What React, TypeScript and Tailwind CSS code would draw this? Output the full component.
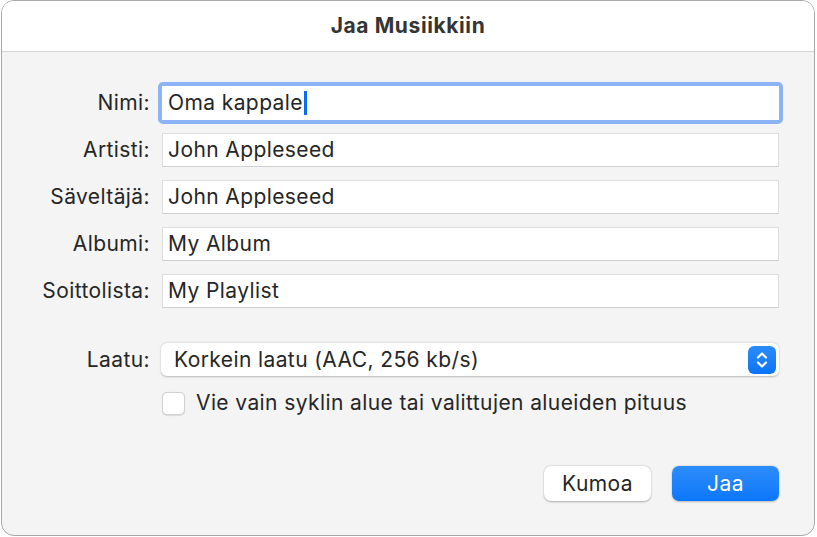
import React from 'react'

const fields = [
  { label: 'Nimi:', value: 'Oma kappale', focused: true },
  { label: 'Artisti:', value: 'John Appleseed' },
  { label: 'Säveltäjä:', value: 'John Appleseed' },
  { label: 'Albumi:', value: 'My Album' },
  { label: 'Soittolista:', value: 'My Playlist' },
]

function Field({ value, focused }: { value: string; focused?: boolean }) {
  if (focused) {
    return (
      <div className="flex-1 rounded-[5px] bg-[#8db3f7] p-[4px] -m-[4px]">
        <div className="h-[34px] bg-white flex items-center pl-[6px]">
          <span>{value}</span>
          <span className="ml-[1px] w-[3px] h-[24px] bg-[#0b6cf2]" />
        </div>
      </div>
    )
  }
  return (
    <div className="flex-1 h-[34px] bg-white border border-[#dedede] border-b-[#cfcfcf] flex items-center pl-[5px]">
      {value}
    </div>
  )
}

export default function App() {
  return (
    <div className="w-[817px] h-[537px] bg-white" style={{ fontFamily: '"Inter", "Liberation Sans", sans-serif' }}>
      <div className="w-[814px] h-[536px] ml-[1px] border border-[#a9a9a9] rounded-[13px] overflow-hidden bg-[#f4f4f4] flex flex-col">
        <div className="h-[51px] bg-white border-b border-[#d6d6d6] flex items-center justify-center">
          <span className="text-[21px] font-bold text-[#353535] tracking-[0.6px]">Jaa Musiikkiin</span>
        </div>

        <div className="flex flex-col pt-[34px] pr-[35px] text-[21px] leading-[26px] tracking-[0.4px] text-[#262626]">
          <div className="flex flex-col gap-[13px]">
            {fields.map((f) => (
              <div key={f.label} className="flex items-center">
                <div className="w-[149px] text-right pr-[1px]">{f.label}</div>
                <div className="w-[11px]" />
                <Field value={f.value} focused={f.focused} />
              </div>
            ))}
          </div>

          <div className="flex items-center mt-[35px]">
            <div className="w-[149px] text-right pr-[1px]">Laatu:</div>
            <div className="w-[10px]" />
            <div className="flex-1 h-[33px] bg-white rounded-[6px] shadow-[0_0.5px_2px_rgba(0,0,0,0.25)] flex items-center justify-between pl-[13px] pr-[3px]">
              <span>Korkein laatu (AAC, 256 kb/s)</span>
              <div className="w-[28px] h-[28px] rounded-[6px] bg-gradient-to-b from-[#2a8cf9] to-[#0a73f5] flex items-center justify-center">
                <svg width="14" height="20" viewBox="0 0 14 20" fill="none" stroke="white" strokeWidth="2.2" strokeLinecap="round" strokeLinejoin="round">
                  <path d="M3 7.5 L7 3.5 L11 7.5" />
                  <path d="M3 12.5 L7 16.5 L11 12.5" />
                </svg>
              </div>
            </div>
          </div>

          <div className="flex items-center mt-[14px] pl-[160px]">
            <div className="w-[23px] h-[23px] rounded-[5px] bg-white border border-[#d0d0d0] shadow-[0_0.5px_1px_rgba(0,0,0,0.1)]" />
            <span className="ml-[11px]">Vie vain syklin alue tai valittujen alueiden pituus</span>
          </div>

          <div className="flex justify-end gap-[21px] mt-[50px]">
            <button className="w-[107px] h-[35px] rounded-[7px] bg-white shadow-[0_0.5px_2px_rgba(0,0,0,0.3)] text-[#262626] tracking-[0.4px]">
              Kumoa
            </button>
            <button className="w-[107px] h-[35px] rounded-[7px] bg-gradient-to-b from-[#2c8cf9] to-[#0a77fb] shadow-[0_0.5px_2px_rgba(0,0,0,0.25)] text-white tracking-[0.4px]">
              Jaa
            </button>
          </div>
        </div>
      </div>
    </div>
  )
}
